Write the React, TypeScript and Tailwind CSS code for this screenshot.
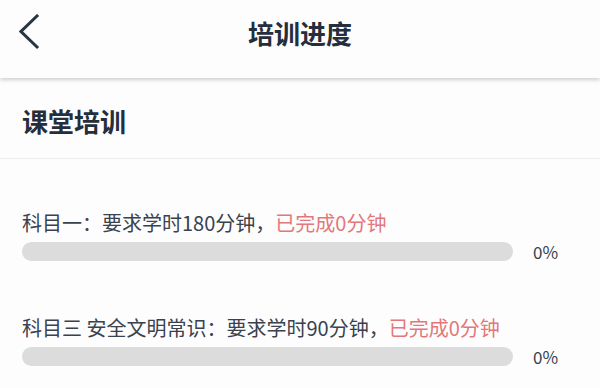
import React from "react";

const courses = [
    { name: "科目一：", required: 180, done: 0 },
    { name: "科目三 安全文明常识：", required: 90, done: 0 },
];

const BackIcon = () => (
    <svg width="24" height="36" viewBox="0 0 24 36" className="text-[#2b3441]">
        <polyline points="18,2 2,17.5 18,33" fill="none" stroke="currentColor" strokeWidth="3" strokeLinecap="square" />
    </svg>
);

const App = () => {
    return (
        <div
            className="w-[600px] h-[388px] overflow-hidden bg-[#fdfdfd] text-[#2f3845]"
            style={{ fontFamily: '"Noto Sans CJK SC", "Noto Sans", sans-serif' }}
        >
            {/* header */}
            <div className="relative h-[78px] flex items-center justify-center bg-[#fdfdfd] shadow-[0_2px_4px_rgba(0,0,0,0.18)]">
                <div className="absolute left-[19px] top-[14px]">
                    <BackIcon />
                </div>
                <h1 className="text-[26px] font-bold leading-none mt-[-12px] text-[#252e3b]">培训进度</h1>
            </div>

            {/* section title */}
            <div className="h-[81px] flex items-center px-[22px] border-b border-[#ececec]">
                <h2 className="text-[26px] font-bold leading-none mt-[6px] text-[#252e3b]">课堂培训</h2>
            </div>

            <div className="flex flex-col gap-[53px] pt-[50px] pl-[22px]">
                {courses.map((c) => (
                    <div key={c.name} className="flex flex-col gap-[5px]">
                        <p className="text-[20px] leading-[28px] text-[#39424e]">
                            {c.name}要求学时{c.required}分钟，
                            <span className="text-[#e3777a]">已完成{c.done}分钟</span>
                        </p>
                        <div className="flex items-center">
                            <div className="w-[491px] h-[19px] rounded-full bg-[#dcdcdc] overflow-hidden">
                                <div className="h-full bg-[#e3777a]" style={{ width: `${(c.done / c.required) * 100}%` }} />
                            </div>
                            <span className="ml-[20px] text-[17px] leading-none text-[#39424e]">
                                {Math.round((c.done / c.required) * 100)}%
                            </span>
                        </div>
                    </div>
                ))}
            </div>
        </div>
    );
};

export default App;
